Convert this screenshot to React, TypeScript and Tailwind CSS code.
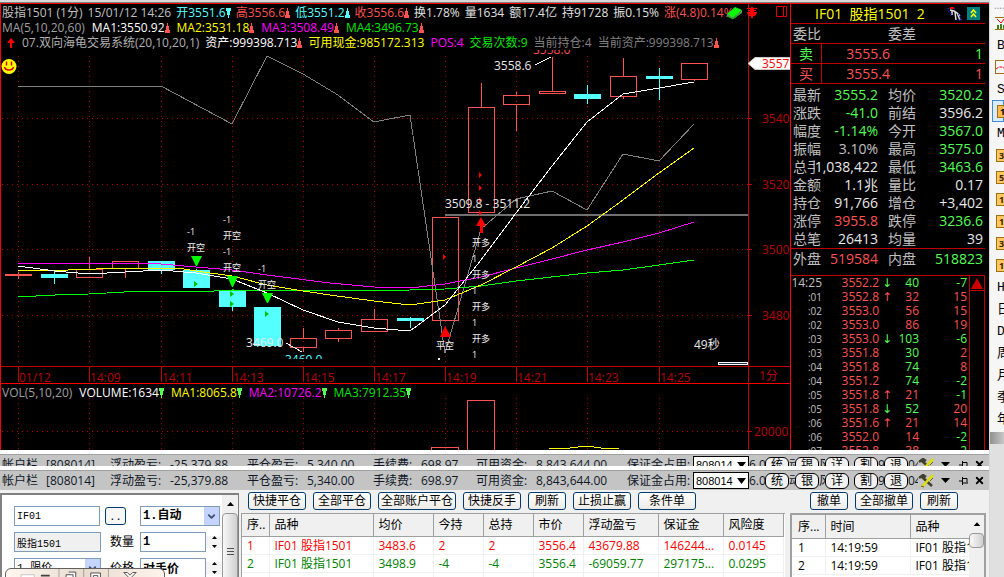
import type { ReactNode } from 'react';
import { ChevronDown, Pin, X } from 'lucide-react';

type Dir = 'up' | 'down';

interface LegendItem {
  text: string;
  color: string;
  dir?: Dir;
  dirColor?: string;
}

const quoteLegend: LegendItem[] = [
  { text: '股指1501 (1分)', color: 'text-[#c0c0c0]' },
  { text: '15/01/12 14:26', color: 'text-[#c0c0c0]' },
  { text: '开3551.6', color: 'text-[#54ffff]', dir: 'down', dirColor: '#54ffff' },
  { text: '高3556.6', color: 'text-[#ff5252]', dir: 'up', dirColor: '#ff5252' },
  { text: '低3551.2', color: 'text-[#54ffff]', dir: 'up', dirColor: '#54ffff' },
  { text: '收3556.6', color: 'text-[#ff5252]', dir: 'up', dirColor: '#ff5252' },
  { text: '换1.78%', color: 'text-[#e0e0e0]' },
  { text: '量1634', color: 'text-[#e0e0e0]' },
  { text: '额17.4亿', color: 'text-[#e0e0e0]' },
  { text: '持91728', color: 'text-[#e0e0e0]' },
  { text: '振0.15%', color: 'text-[#e0e0e0]' },
  { text: '涨(4.8)0.14%', color: 'text-[#ff5252]' },
];

const maLegend: LegendItem[] = [
  { text: 'MA(5,10,20,60)', color: 'text-[#a0a0a0]' },
  { text: 'MA1:3550.92', color: 'text-white', dir: 'up', dirColor: '#ff5252' },
  { text: 'MA2:3531.18', color: 'text-[#ffff00]', dir: 'up', dirColor: '#ff5252' },
  { text: 'MA3:3508.49', color: 'text-[#ff00ff]', dir: 'up', dirColor: '#ff5252' },
  { text: 'MA4:3496.73', color: 'text-[#00e600]', dir: 'up', dirColor: '#ff5252' },
];

const systemLegend: LegendItem[] = [
  { text: '07.双向海龟交易系统(20,10,20,1)', color: 'text-[#b0b0b0]' },
  { text: '资产:999398.713', color: 'text-white', dir: 'up', dirColor: '#ff5252' },
  { text: '可用现金:985172.313', color: 'text-[#ffff00]' },
  { text: 'POS:4', color: 'text-[#ff00ff]' },
  { text: '交易次数:9', color: 'text-[#00e600]' },
  { text: '当前持仓:4', color: 'text-[#808080]' },
  { text: '当前资产:999398.713', color: 'text-[#808080]', dir: 'up', dirColor: '#ff5252' },
];

interface Candle {
  x: number;
  top: number;
  bottom: number;
  high: number;
  low: number;
  fall?: boolean;
}

const candles: Candle[] = [
  { x: 18, top: 274, bottom: 275, high: 272, low: 279 },
  { x: 54, top: 274, bottom: 278, high: 271, low: 284, fall: true },
  { x: 89, top: 269, bottom: 277, high: 257, low: 277 },
  { x: 125, top: 261, bottom: 268, high: 261, low: 278 },
  { x: 161, top: 261, bottom: 270, high: 261, low: 274, fall: true },
  { x: 196, top: 270, bottom: 288, high: 269, low: 288, fall: true },
  { x: 232, top: 291, bottom: 307, high: 290, low: 311, fall: true },
  { x: 267, top: 307, bottom: 346, high: 307, low: 346, fall: true },
  { x: 303, top: 338, bottom: 347, high: 328, low: 352 },
  { x: 338, top: 330, bottom: 338, high: 328, low: 342 },
  { x: 374, top: 319, bottom: 331, high: 309, low: 331 },
  { x: 410, top: 318, bottom: 321, high: 317, low: 328, fall: true },
  { x: 445, top: 217, bottom: 320, high: 217, low: 320 },
  { x: 481, top: 107, bottom: 212, high: 83, low: 212 },
  { x: 516, top: 95, bottom: 104, high: 92, low: 131 },
  { x: 552, top: 91, bottom: 93, high: 57, low: 93 },
  { x: 587, top: 94, bottom: 99, high: 85, low: 104, fall: true },
  { x: 623, top: 76, bottom: 96, high: 58, low: 99 },
  { x: 659, top: 76, bottom: 79, high: 68, low: 100, fall: true },
  { x: 694, top: 63, bottom: 79, high: 63, low: 81 },
];

const lines = [
  { color: '#808080', points: '18,86 161,86 232,124 267,56 303,74 338,95 374,122 410,115 445,353 481,229 516,199 552,191 587,210 623,154 659,161 694,124' },
  { color: '#00ff00', points: '18,296 36,296 55,295 89,294 142,291 214,291 232,290 374,291 410,290 445,289 481,286 516,281 587,273 623,270 659,265 694,260' },
  { color: '#ff00ff', points: '18,263 108,263 161,264 196,267 232,270 267,275 330,283 374,287 410,288 445,284 481,277 516,268 552,259 587,250 623,242 659,233 694,222' },
  { color: '#ffff00', points: '18,270 68,270 125,268 178,268 196,271 232,276 267,285 303,291 330,295 374,301 410,305 445,300 481,285 516,267 552,248 587,226 623,200 659,173 694,148' },
  { color: '#ffffff', points: '18,266 55,271 89,274 125,272 161,270 196,273 232,279 267,293 303,310 338,322 374,328 410,331 445,305 481,260 516,213 552,166 587,122 623,94 659,88 694,82' },
];

const gridTimes = [
  { x: 18, label: '01/12' },
  { x: 89, label: '14:09' },
  { x: 161, label: '14:11' },
  { x: 232, label: '14:13' },
  { x: 303, label: '14:15' },
  { x: 374, label: '14:17' },
  { x: 445, label: '14:19' },
  { x: 516, label: '14:21' },
  { x: 587, label: '14:23' },
  { x: 659, label: '14:25' },
];

const gridPrices = [
  { y: 118, label: '3540' },
  { y: 184, label: '3520' },
  { y: 249, label: '3500' },
  { y: 315, label: '3480' },
];

const signals = [
  { x: 187, y: 235, text: '-1' },
  { x: 187, y: 251, text: '开空' },
  { x: 223, y: 223, text: '-1' },
  { x: 223, y: 239, text: '开空' },
  { x: 223, y: 255, text: '-1' },
  { x: 223, y: 271, text: '开空' },
  { x: 258, y: 272, text: '-1' },
  { x: 258, y: 288, text: '开空' },
  { x: 436, y: 349, text: '平空' },
  { x: 472, y: 246, text: '开多' },
  { x: 472, y: 262, text: '1' },
  { x: 472, y: 278, text: '开多' },
  { x: 472, y: 294, text: '1' },
  { x: 472, y: 310, text: '开多' },
  { x: 472, y: 326, text: '1' },
  { x: 472, y: 342, text: '开多' },
  { x: 472, y: 358, text: '1' },
];

const greenMarks = [[194, 284], [230, 294], [230, 304], [265, 314]];
const redMarks = [[443, 257], [479, 175], [479, 188], [479, 200], [479, 213]];

const G = 'text-[#54ff54]';
const R = 'text-[#ff5252]';
const W = 'text-[#e8e8e8]';

const quoteRows = [
  ['最新', '3555.2', G, '均价', '3520.2', G],
  ['涨跌', '-41.0', G, '前结', '3596.2', W],
  ['幅度', '-1.14%', G, '今开', '3567.0', G],
  ['振幅', '3.10%', 'text-[#c0c0c0]', '最高', '3575.0', G],
  ['总手', '1,038,422', W, '最低', '3463.6', G],
  ['金额', '1.1兆', W, '量比', '0.17', W],
  ['持仓', '91,766', W, '增仓', '+3,402', W],
  ['涨停', '3955.8', R, '跌停', '3236.6', G],
  ['总笔', '26413', W, '均量', '39', W],
];

const ticks = [
  { time: '14:25', price: '3552.2', dir: '↓', vol: '40', volColor: G, delta: '-7' },
  { time: ':01', price: '3552.8', dir: '↑', vol: '32', volColor: R, delta: '15' },
  { time: ':02', price: '3553.0', dir: '', vol: '56', volColor: R, delta: '15' },
  { time: ':02', price: '3553.0', dir: '', vol: '86', volColor: R, delta: '19' },
  { time: ':03', price: '3553.0', dir: '↓', vol: '103', volColor: G, delta: '-6' },
  { time: ':03', price: '3551.8', dir: '', vol: '30', volColor: G, delta: '2' },
  { time: ':04', price: '3551.8', dir: '', vol: '74', volColor: G, delta: '8' },
  { time: ':04', price: '3551.2', dir: '', vol: '74', volColor: G, delta: '-2' },
  { time: ':05', price: '3551.8', dir: '↑', vol: '21', volColor: R, delta: '-1' },
  { time: ':05', price: '3551.8', dir: '↓', vol: '52', volColor: G, delta: '20' },
  { time: ':06', price: '3551.6', dir: '↑', vol: '21', volColor: R, delta: '14' },
  { time: ':06', price: '3552.0', dir: '', vol: '14', volColor: R, delta: '-2' },
  { time: ':07', price: '3552.8', dir: '', vol: '38', volColor: R, delta: '-2' },
];

const positionHead = ['序..', '品种', '均价', '今持', '总持', '市价', '浮动盈亏', '保证金', '风险度'];
const positionRows = [
  { color: 'text-[#ff0000]', cells: ['1', 'IF01 股指1501', '3483.6', '2', '2', '3556.4', '43679.88', '146244...', '0.0145'] },
  { color: 'text-[#008000]', cells: ['2', 'IF01 股指1501', '3498.9', '-4', '-4', '3556.4', '-69059.77', '297175...', '0.0295'] },
];

function LegendRow({ items, gap, children }: { items: LegendItem[]; gap: string; children?: ReactNode }) {
  return (
    <div className={`flex h-[15px] items-center whitespace-nowrap ${gap}`}>
      {children}
      {items.map((item) => (
        <span key={item.text} className={`flex shrink-0 items-center ${item.color}`}>
          {item.text}
          {item.dir && (
            <svg className="h-[10px] w-[5px]" viewBox="0 0 5 10" fill={item.dirColor}>
              {item.dir === 'up' ? (
                <path d="M2 0h1v3h1v4h1v3H0V7h1V3h1z" />
              ) : (
                <path d="M0 0h5v3H4v4H3v3H2V7H1V3H0z" />
              )}
            </svg>
          )}
        </span>
      ))}
    </div>
  );
}

function ChartHeader() {
  return (
    <div className="relative flex shrink-0 pl-[2px] text-xs leading-[15px]">
      <div className="min-w-0 flex-1 overflow-hidden border-r border-[#c00000] pt-px">
        <LegendRow items={quoteLegend} gap="gap-[5px]" />
        <LegendRow items={maLegend} gap="gap-[7px]" />
        <LegendRow items={systemLegend} gap="gap-[6px]">
          <svg className="ml-[4px] h-[10px] w-[10px] shrink-0" viewBox="0 0 10 10" fill="#ff0000">
            <path d="M5 0l4 5H6v5H4V5H1z" />
          </svg>
        </LegendRow>
      </div>
      <div className="w-[41px] shrink-0" />
      <div className="absolute right-[3px] top-[2px] flex items-start">
        <svg className="h-[14px] w-[17px]" viewBox="0 0 17 14">
          <path d="M1 8l8-7 7 3-9 8z" fill="#00ff00" />
          <path d="M1 8l6 4 9-8v3l-9 6-6-3z" fill="#888" />
          <path d="M1 10l6 3 9-7" fill="none" stroke="#00c000" />
        </svg>
        <svg className="ml-[4px] mt-px h-[11px] w-[10px]" viewBox="0 0 10 11" fill="#ff0000">
          <path d="M0 1h4V0h2v1h4v1H7v1h2v1H7v1h3v1L8 9H6v2H4V9H2L0 6V5h3V4H1V3h2V2H0z" />
        </svg>
        <svg className="ml-[19px] h-[11px] w-[11px]" viewBox="0 0 11 11" stroke="#e00000" fill="none">
          <path d="M.5.5h10v10H.5zM7.500.5v10" />
        </svg>
      </div>
    </div>
  );
}

function Chart() {
  return (
    <svg
      className="min-h-0 w-full flex-1 text-xs"
      viewBox="0 50 790 400"
      preserveAspectRatio="xMinYMin meet"
      role="img"
      aria-label="股指1501 1分"
    >
      <defs>
        <clipPath id="pane">
          <rect x="0" y="50" width="790" height="309" />
        </clipPath>
      </defs>

      {/* grid */}
      <g stroke="#b00000" strokeDasharray="1 4" shapeRendering="crispEdges">
        {gridTimes.map((t) => (
          <path key={t.x} d={`M${t.x}.5 56V366M${t.x}.5 398V450`} />
        ))}
        {gridPrices.map((p) => (
          <path key={p.y} d={`M2 ${p.y}.5H748`} />
        ))}
        <path d="M2 431.5H748" />
      </g>
      <g stroke="#c00000" shapeRendering="crispEdges">
        <path d="M748.5 50V450M0 366.5H790" />
        <path d="M0 383.5H790" stroke="#ff0000" />
        {gridTimes.map((t) => (
          <path key={t.x} d={`M${t.x}.5 366V382`} />
        ))}
        {gridPrices.map((p) => (
          <path key={p.y} d={`M748 ${p.y}.5h4`} />
        ))}
        <path d="M748 431.5h4" />
      </g>
      <g fill="#b80000">
        {gridTimes.map((t) => (
          <text key={t.x} x={t.x + 1} y="382">{t.label}</text>
        ))}
        {gridPrices.map((p) => (
          <text key={p.y} x="762" y={p.y + 5}>{p.label}</text>
        ))}
        <text x="754" y="436">20000</text>
        <text x="759" y="380">1分</text>
      </g>

      {/* candles */}
      <g shapeRendering="crispEdges">
        {candles.map((c) =>
          c.fall ? (
            <g key={c.x} fill="#54ffff">
              <rect x={c.x - 13} y={c.top} width="27" height={c.bottom - c.top} />
              <rect x={c.x} y={c.high} width="1" height={c.low - c.high} />
            </g>
          ) : (
            <g key={c.x} stroke="#ff5252" fill="none">
              <rect x={c.x - 12.5} y={c.top + 0.5} width="26" height={c.bottom - c.top} />
              <path d={`M${c.x}.5 ${c.high}V${c.top}M${c.x}.5 ${c.bottom}V${c.low}`} />
            </g>
          )
        )}
        <path d="M431.5 450v-2.500h27v2.500M467.500 450V400.500h27V450" stroke="#ff5252" fill="none" />
        <path d="M445 215H748" stroke="#707070" strokeWidth="2" />
        <rect x="718.5" y="362.5" width="29" height="2" fill="#203050" stroke="#fff" />
      </g>

      <g fill="none" shapeRendering="crispEdges">
        {lines.map((l) => (
          <polyline key={l.color} points={l.points} stroke={l.color} />
        ))}
        <polyline points="549,449 570,448 587,446 601,448 619,449" stroke="#ffff00" />
        <path d="M286 343L302 352M535 65L551 57" stroke="#fff" />
      </g>

      {/* signals */}
      <g fill="#00ff00">
        <path d="M191 256h11l-5 10h-1zM227 276h11l-5 11h-1zM262 293h11l-5 10h-1z" />
        {greenMarks.map(([x, y]) => (
          <path key={`${x}-${y}`} d={`M${x} ${y - 3}l4 3-4 3z`} fill="#00c000" />
        ))}
      </g>
      <g fill="#ff0000">
        <path d="M481 217l5 9h-3v7h-3v-7h-4zM445 326l6 11h-11z" />
        {redMarks.map(([x, y]) => (
          <path key={`${x}-${y}`} d={`M${x} ${y - 3}l3 3-3 3z`} />
        ))}
      </g>
      <g fill="#f0f0f0" className="text-[9px]">
        {signals.map((s) => (
          <text key={`${s.x}-${s.y}`} x={s.x} y={s.y}>{s.text}</text>
        ))}
        <rect x="438" y="358" width="2" height="2" />
      </g>
      <g fill="#e8e8e8">
        <text x="494" y="70">3558.6</text>
        <text x="445" y="208">3509.8 - 3511.2</text>
        <text x="246" y="347">3469.0</text>
        <text x="694" y="349">49秒</text>
        <g clipPath="url(#pane)">
          <text x="285" y="364" fill="#54ffff">3469.0</text>
          <text x="533" y="54" fill="#ff5252">3558.6</text>
        </g>
      </g>

      {/* last price tag */}
      <path d="M748 63.500l7-6h36v12h-36z" fill="#fff" stroke="#c8c8c8" />
      <text x="762" y="68" fill="#ff0000">3557</text>

      <circle cx="9" cy="66.500" r="7.500" fill="#ffff00" />
      <path d="M6.500 61.500v4M11.500 61.500v4M4.500 67c1 4 8 4 9 0" stroke="#e00000" fill="none" strokeWidth="1.500" />
    </svg>
  );
}

function VolumeLegend() {
  const items: LegendItem[] = [
    { text: 'VOL(5,10,20)', color: 'text-[#a0a0a0]' },
    { text: 'VOLUME:1634', color: 'text-white', dir: 'down', dirColor: '#54ff54' },
    { text: 'MA1:8065.8', color: 'text-[#ffff00]', dir: 'down', dirColor: '#54ff54' },
    { text: 'MA2:10726.2', color: 'text-[#ff00ff]', dir: 'down', dirColor: '#54ff54' },
    { text: 'MA3:7912.35', color: 'text-[#00e600]', dir: 'down', dirColor: '#54ff54' },
  ];
  return (
    <div className="absolute left-[2px] top-[381px] text-xs leading-[15px]">
      <LegendRow items={items} gap="gap-[7px]" />
    </div>
  );
}

function QuotePanel() {
  return (
    <aside className="flex w-[199px] shrink-0 flex-col overflow-hidden border-l border-t border-[#ff0000] bg-black pr-[4px] text-sm leading-[18px] text-[#c0c0c0]">
      <header className="flex h-5 shrink-0 items-center border-b border-[#c00000] pl-6 text-[#ffff00]">
        <span className="flex-1 whitespace-pre">IF01  股指1501  2</span>
        <svg className="mr-1 h-[14px] w-[16px]" viewBox="0 0 16 14">
          <path d="M3 3l4 1 3 2 3 7M5 4v4M8 5l1 8M10 6l3 3" stroke="#e0e0e0" fill="none" strokeWidth="1.500" />
          <path d="M0 2l3-1h4l1 2M1 4l3 2v3M11 7l4 6h-4" stroke="#2020e0" fill="none" strokeDasharray="2 1" />
          <path d="M3 1h4" stroke="#ff0000" strokeWidth="2" />
        </svg>
        <button aria-label="收起" className="mr-[5px] flex h-[13px] w-[13px] items-center justify-center bg-[#008080]">
          <svg className="h-[9px] w-[7px]" viewBox="0 0 7 9" fill="none" stroke="#ffff00" strokeWidth="1.500">
            <path d="M1 4l2.500-3L6 4M1 8l2.500-3L6 8" />
          </svg>
        </button>
      </header>
      <div className="flex h-5 shrink-0 items-center border-b border-[#c00000] pl-[2px]">
        <span className="w-[95px]">委比</span>
        <span>委差</span>
      </div>
      <div className={`flex h-5 shrink-0 items-center border-b border-[#c00000] pr-[2px] ${G}`}>
        <span className="flex h-full w-[31px] items-center justify-center border-r border-[#c00000]">卖</span>
        <span className={`w-[68px] text-right ${R}`}>3555.6</span>
        <span className="flex-1 text-right">1</span>
      </div>
      <div className={`flex h-5 shrink-0 items-center border-b border-[#c00000] pr-[2px] ${R}`}>
        <span className="flex h-full w-[31px] items-center justify-center border-r border-[#c00000]">买</span>
        <span className="w-[68px] text-right">3555.4</span>
        <span className="flex-1 text-right">1</span>
      </div>
      <table className="mt-[2px] w-full shrink-0 table-fixed">
        <tbody>
          {quoteRows.map(([a, av, ac, b, bv, bc]) => (
            <tr key={a} className="h-[18px]">
              <th className="w-[30px] p-0 pl-[2px] text-left font-normal">{a}</th>
              <td className={`w-[57px] p-0 ${ac}`}>
                <span className="flex justify-end"><span className="bg-black">{av}</span></span>
              </td>
              <th className="w-[38px] p-0 pl-[10px] text-left font-normal">{b}</th>
              <td className={`p-0 pr-[2px] text-right ${bc}`}>{bv}</td>
            </tr>
          ))}
        </tbody>
      </table>
      <div className="flex h-7 shrink-0 items-start border-b border-t border-[#c00000] pl-[2px] pr-[2px] pt-px">
        <span className="w-[28px]">外盘</span>
        <span className={`w-[57px] text-right ${R}`}>519584</span>
        <span className="ml-[10px]">内盘</span>
        <span className={`flex-1 text-right ${G}`}>518823</span>
      </div>
      <div className="flex min-h-0 flex-1 overflow-hidden text-xs leading-[14px]">
        <table className="table-fixed flex-1 self-start">
          <tbody>
            {ticks.map((t, i) => (
              <tr key={i} className="h-[14px]">
                <td className={`w-[31px] p-0 text-right ${i === 0 ? '' : 'text-[10px]'}`}>{t.time}</td>
                <td className={`w-[57px] p-0 text-right ${R}`}>{t.price}</td>
                <td className={`w-[16px] p-0 text-center font-['DejaVu_Sans'] ${t.dir === '↓' ? G : R}`}>{t.dir}</td>
                <td className={`w-[24px] p-0 text-right ${t.volColor}`}>{t.vol}</td>
                <td className={`p-0 pr-[2px] text-right ${t.delta.startsWith('-') ? G : R}`}>{t.delta}</td>
              </tr>
            ))}
          </tbody>
        </table>
        <div className="w-[16px] shrink-0 border-x border-[#c00000]">
          <button aria-label="向上滚动" className="flex h-[15px] w-full items-center justify-center border-b border-[#c00000]">
            <svg className="h-[11px] w-[12px]" viewBox="0 0 12 11" fill="#d00000"><path d="M6 0l6 11H0z" /></svg>
          </button>
        </div>
      </div>
    </aside>
  );
}

const railText = (t: string) => <span className="pl-[7px] font-['Liberation_Mono','Noto_Sans_CJK_SC',monospace] text-[13px]">{t}</span>;
const railBox = (t: string) => (
  <span className="ml-[6px] flex h-[13px] w-[18px] shrink-0 items-center border border-[#a07010] bg-[#ffc860] pl-[2px] text-[9px] font-bold text-[#402000]">
    {t}
  </span>
);

function Rail() {
  return (
    <nav className="flex min-w-0 flex-1 flex-col overflow-hidden border-l border-[#d8d8d8] bg-[#f6f6f6] leading-none text-black">
      <div className="h-3 shrink-0 pl-[4px] text-[10px] text-[#909090]">....</div>
      <button className="flex h-[22px] shrink-0 items-center">
        <svg className="ml-[5px] h-[13px] w-[14px] shrink-0" viewBox="0 0 14 13" fill="none">
          <path d="M0 .5h14M0 12.500h14" stroke="#a07010" />
          <path d="M2 2l4 4 3-4 4 4" stroke="#ff0000" />
          <path d="M3 12V8M6 12V7M9 12V8M12 12V5" stroke="#408020" strokeWidth="2" />
        </svg>
      </button>
      <button className="flex h-[22px] shrink-0 items-center">{railText('B')}</button>
      <button className="flex h-[22px] shrink-0 items-center">
        <svg className="ml-[5px] h-[14px] w-[14px] shrink-0" viewBox="0 0 14 14" fill="none">
          <path d="M.5.5H14M.5 13.500H14M.5 0v14" stroke="#a07010" />
          <path d="M1 9l3-2h3l2 1 4-3" stroke="#ff0000" strokeDasharray="3 1" />
        </svg>
      </button>
      <button className="flex h-[22px] shrink-0 items-center">{railText('S')}</button>
      <button className="ml-[2px] flex h-[22px] shrink-0 items-center border border-[#3c8cdc] bg-[#dcebfc]">
        <span className="ml-[4px] flex h-[13px] w-[18px] shrink-0 items-center border border-[#a07010] bg-[#ffb850] pl-[2px] text-[9px] font-bold">1</span>
      </button>
      <button className="flex h-[22px] shrink-0 items-center">{railText('M')}</button>
      {['3', '5', '10', '15', '30', '1'].map((t, i) => (
        <button key={i} className="flex h-[22px] shrink-0 items-center">{railBox(t)}</button>
      ))}
      {['H', '日', 'D', '周', '月', '季', '年'].map((t) => (
        <button key={t} className="flex h-[22px] shrink-0 items-center">{railText(t)}</button>
      ))}
      <div className="mt-[2px] h-[12px] shrink-0 bg-gradient-to-r from-[#909090] to-[#c8c8c8]" />
      <div className="flex-1 bg-[#e0e0e0]" />
    </nav>
  );
}

function PillButton({ children }: { children: string }) {
  return (
    <button className="h-[16px] w-[24px] shrink-0 rounded-md border border-black bg-[#f0f0f0] text-center leading-[14px] text-black">
      {children}
    </button>
  );
}

function AccountBar({ id, className }: { id: string; className: string }) {
  return (
    <div className={`shrink-0 overflow-hidden border-t border-[#a0a0a0] bg-[#c4c4c4] ${className}`}>
      <div className="flex h-[19px] items-center whitespace-nowrap pl-[2px] text-xs leading-[19px] text-[#101828]">
        <span className="w-[44px] shrink-0">帐户栏</span>
        <span className="w-[64px] shrink-0">[808014]</span>
        <span className="w-[60px] shrink-0">浮动盈亏:</span>
        <span className="w-[77px] shrink-0">-25,379.88</span>
        <span className="w-[60px] shrink-0">平仓盈亏:</span>
        <span className="w-[66px] shrink-0">5,340.00</span>
        <span className="w-[48px] shrink-0">手续费:</span>
        <span className="w-[55px] shrink-0">698.97</span>
        <span className="w-[60px] shrink-0">可用资金:</span>
        <span className="w-[91px] shrink-0">8,843,644.00</span>
        <label htmlFor={id} className="w-[66px] shrink-0">保证金占用:</label>
        <span className="relative w-[56px] shrink-0">
          <select
            id={id}
            className="block h-[17px] w-full appearance-none border border-black bg-white pl-[2px] font-['Liberation_Sans',sans-serif] text-[11px] leading-[14px] text-black"
          >
            <option>808014</option>
          </select>
          <svg className="pointer-events-none absolute right-[3px] top-[6px] h-[6px] w-[9px]" viewBox="0 0 9 6"><path d="M0 0h9L4.500 6z" /></svg>
        </span>
        <span className="w-[16px] shrink-0 overflow-hidden">6.0</span>
        <PillButton>统</PillButton>
        <span className="w-[6px] shrink-0 overflow-hidden">动</span>
        <PillButton>银</PillButton>
        <span className="w-[6px] shrink-0 overflow-hidden">风</span>
        <PillButton>详</PillButton>
        <span className="w-[5px] shrink-0" />
        <PillButton>割</PillButton>
        <span className="w-[6px] shrink-0 overflow-hidden">9</span>
        <PillButton>退</PillButton>
        <span className="w-[10px] shrink-0 overflow-hidden">04.5</span>
        <svg className="h-[14px] w-[16px] shrink-0" viewBox="0 0 16 14" fill="none">
          <path d="M1 4l4-3 3 2M4 3l10 9" stroke="#404030" strokeWidth="2.500" />
          <path d="M15 1l-4 4-7 8" stroke="#e0e000" strokeWidth="2.500" />
          <path d="M15 4l-3 3M6 13l-3-1" stroke="#606020" />
        </svg>
        <button aria-label="菜单" className="ml-[7px] shrink-0">
          <svg className="h-[5px] w-[9px]" viewBox="0 0 9 5"><path d="M0 0h9L4.500 5z" /></svg>
        </button>
        <button aria-label="固定" className="ml-[9px] shrink-0">
          <svg className="h-[8px] w-[9px]" viewBox="0 0 9 8" fill="none" stroke="#000">
            <path d="M0 4h3M3.500 0v8M3 1.500h5v4M3 6h6" />
          </svg>
        </button>
        <button aria-label="关闭" className="ml-[6px] shrink-0">
          <X className="h-[11px] w-[11px] text-black" strokeWidth={4} />
        </button>
      </div>
    </div>
  );
}

function XpButton({ children, className }: { children: string; className: string }) {
  return (
    <button className={`h-[18px] shrink-0 rounded-[3px] border border-[#003c74] bg-gradient-to-b from-white to-[#ecebe6] text-center text-xs leading-[16px] text-black ${className}`}>
      {children}
    </button>
  );
}

function Spinner() {
  return (
    <span className="flex w-[16px] shrink-0 flex-col items-center gap-[6px] bg-[#f4f4f4]">
      <svg className="h-[3px] w-[5px]" viewBox="0 0 5 3"><path d="M0 3h5L2.500 0z" /></svg>
      <svg className="h-[3px] w-[5px]" viewBox="0 0 5 3"><path d="M0 0h5L2.500 3z" /></svg>
    </span>
  );
}

function SelectArrow() {
  return (
    <span className="pointer-events-none absolute right-px top-px flex h-[18px] w-[15px] items-center justify-center bg-[#c4d4fc]">
      <ChevronDown className="h-[11px] w-[11px] text-[#405078]" strokeWidth={4} />
    </span>
  );
}

const fieldClass = "h-5 border border-[#7f9db9] pl-[2px] font-['Liberation_Mono','Noto_Sans_CJK_SC',monospace] text-black";

function OrderForm() {
  return (
    <div className="relative mt-[3px] flex w-[239px] shrink-0 self-stretch overflow-hidden border-l-2 border-r border-t-2 border-[#808080] bg-white text-xs text-black">
      <form className="w-[220px] shrink-0 overflow-hidden pl-[12px] pt-[11px]">
        <div className="flex items-center">
          <input aria-label="合约" defaultValue="IF01" className={`${fieldClass} w-[86px] bg-white text-[10px]`} />
          <button type="button" className="ml-[5px] h-[18px] w-[21px] rounded-[3px] border border-[#003c74] bg-[#f6f6f4] leading-[14px]">. .</button>
          <span className="relative ml-[14px] w-[80px] shrink-0">
            <select aria-label="开平" className={`${fieldClass} block w-full appearance-none bg-white font-bold`}>
              <option>1.自动</option>
            </select>
            <SelectArrow />
          </span>
        </div>
        <div className="mt-[6px] flex items-center">
          <input aria-label="品种" readOnly defaultValue="股指1501" className={`${fieldClass} w-[87px] bg-[#f0f0f0] text-[10px]`} />
          <label htmlFor="qty" className="ml-[9px] w-[30px] shrink-0">数量</label>
          <input id="qty" defaultValue="1" className={`${fieldClass} w-[66px] bg-white font-bold`} />
          <Spinner />
        </div>
        <div className="mt-[6px] flex items-center">
          <span className="relative w-[87px] shrink-0">
            <select aria-label="价格类型" className={`${fieldClass} block w-full appearance-none bg-white text-[11px]`}>
              <option>1.限价</option>
            </select>
            <SelectArrow />
          </span>
          <label htmlFor="price" className="ml-[9px] w-[30px] shrink-0">价格</label>
          <input id="price" defaultValue="对手价" className={`${fieldClass} w-[66px] bg-white font-bold`} />
          <Spinner />
        </div>
      </form>
      <div className="flex-1 bg-[#f0f0f0]">
        <svg className="h-[18px] w-full" viewBox="0 0 16 18"><path d="M5 11h7L8.500 7z" /></svg>
        <div className="flex h-[90px] flex-col items-center gap-[2px] rounded-sm border border-[#989898] bg-gradient-to-r from-[#f8f8f8] to-[#d0d0d0] pt-[34px]">
          <span className="h-px w-[7px] bg-[#505050]" />
          <span className="h-px w-[7px] bg-[#505050]" />
          <span className="h-px w-[7px] bg-[#505050]" />
        </div>
      </div>
      {/* floating window controls */}
      <div className="absolute -bottom-2 left-[3px] flex h-[17px] w-[160px] rounded-md border border-[#606060] bg-gradient-to-r from-[#fff8f0] via-[#e8dcd0] to-[#fff4ec]">
        <svg className="h-full w-full" viewBox="0 0 160 17" fill="none" stroke="#404040">
          <path d="M50.500 0v17M78.500 0v17M106.500 0v17" stroke="#a09890" />
          <path d="M7.500 6.500h15v8h-15z" fill="#fff" stroke="#c0c0c0" />
          <path d="M30 7.500h10" strokeWidth="2" />
          <path d="M61.500 3.500h8v8M58.500 6.500h8v8h-8z" fill="#fff" />
          <path d="M86.500 4.500h11v10h-11zM89.500 7.500h5v3h-5z" fill="#fff" />
          <path d="M124 4h4l3 3 3-3h4l-5 5 5 5h-14l5-5z" fill="#fff" />
        </svg>
      </div>
    </div>
  );
}

const positionWidths = ['w-[27px]', 'w-[104px]', 'w-[60px]', 'w-[50px]', 'w-[50px]', 'w-[50px]', 'w-[75px]', 'w-[65px]', 'w-[60px]'];

function Positions() {
  return (
    <section className="min-w-0 flex-1 overflow-hidden pl-[2px]">
      <div className="flex gap-[7px] pl-[7px] pt-[2px]">
        <XpButton className="w-[58px]">快捷平仓</XpButton>
        <XpButton className="w-[58px]">全部平仓</XpButton>
        <XpButton className="w-[78px]">全部账户平仓</XpButton>
        <XpButton className="w-[58px]">快捷反手</XpButton>
        <XpButton className="w-[38px]">刷新</XpButton>
        <XpButton className="w-[58px]">止损止赢</XpButton>
        <XpButton className="w-[58px]">条件单</XpButton>
      </div>
      <div className="mr-[4px] mt-[3px] h-full border-l border-t border-[#a0a0a0] bg-white">
        <table className="table-fixed text-left text-xs leading-[17px]">
          <thead>
            <tr className="h-[22px] bg-[#f0f0f0] text-black">
              {positionHead.map((h, i) => (
                <th key={h} className={`overflow-hidden whitespace-nowrap border-b border-r border-[#a0a0a0] p-0 pl-[5px] font-normal ${positionWidths[i]}`}>{h}</th>
              ))}
            </tr>
          </thead>
          <tbody>
            {positionRows.map((row) => (
              <tr key={row.cells[0]} className={`h-[18px] ${row.color}`}>
                {row.cells.map((cell, i) => (
                  <td key={i} className="whitespace-nowrap border-b border-r border-[#f0f0f0] p-0 pl-[5px]">{cell}</td>
                ))}
              </tr>
            ))}
            <tr className="h-[18px]">
              {positionHead.map((h) => (
                <td key={h} className="border-r border-[#f0f0f0] p-0" />
              ))}
            </tr>
          </tbody>
        </table>
      </div>
    </section>
  );
}

function Orders() {
  return (
    <section className="w-[200px] shrink-0 overflow-hidden">
      <div className="flex gap-[7px] pl-[21px] pt-[2px]">
        <XpButton className="w-[38px]">撤单</XpButton>
        <XpButton className="w-[58px]">全部撤单</XpButton>
        <XpButton className="w-[38px]">刷新</XpButton>
      </div>
      <div className="ml-px mr-[3px] mt-[3px] flex h-full border-2 border-[#a0a0a0] bg-white">
        <div className="min-w-0 flex-1 overflow-hidden">
          <table className="w-full table-fixed text-left text-xs leading-[17px] text-black">
            <thead>
              <tr className="h-[23px] bg-[#f0f0f0]">
                <th className="w-[33px] border-b border-r border-[#a0a0a0] p-0 pl-[6px] font-normal">序...</th>
                <th className="w-[85px] border-b border-r border-[#a0a0a0] p-0 pl-[5px] font-normal">时间</th>
                <th className="border-b border-[#a0a0a0] p-0 pl-[5px] font-normal">品种</th>
              </tr>
            </thead>
            <tbody>
              {['1', '2'].map((n) => (
                <tr key={n} className="h-[18px]">
                  <td className="border-b border-r border-[#f0f0f0] p-0 pl-[6px]">{n}</td>
                  <td className="border-b border-r border-[#f0f0f0] p-0 pl-[5px]">14:19:59</td>
                  <td className="overflow-hidden whitespace-nowrap border-b border-[#f0f0f0] p-0 pl-[5px]">IF01 股指1501</td>
                </tr>
              ))}
            </tbody>
          </table>
        </div>
        <div className="w-[15px] shrink-0 bg-[#f0f0f0]">
          <svg className="h-[18px] w-full" viewBox="0 0 16 18"><path d="M5 11h7L8.500 7z" /></svg>
          <div className="h-[15px] rounded-sm border border-[#989898] bg-gradient-to-r from-[#f8f8f8] to-[#d0d0d0]" />
        </div>
      </div>
    </section>
  );
}

export default function App() {
  return (
    <div className="flex h-screen w-full overflow-hidden bg-white font-['Open_Sans','Noto_Sans_CJK_SC',sans-serif]">
      <div className="flex w-[calc(100%-15px)] shrink-0 flex-col">
        <div className="h-[3px] shrink-0 border-b border-[#808080] bg-[#d8d8d8]" />
        <main className="flex min-h-0 flex-1 bg-black">
          <div className="relative flex min-w-0 flex-1 flex-col border-t border-[#ff0000]">
            <ChartHeader />
            <Chart />
            <VolumeLegend />
            <div className="absolute inset-y-0 left-0 w-px bg-[#ff0000]" />
          </div>
          <QuotePanel />
        </main>
        <div className="h-[4px] shrink-0 bg-white" />
        <AccountBar id="account-top" className="h-[12px]" />
        <div className="h-[4px] shrink-0 bg-white" />
        <AccountBar id="account" className="h-[20px]" />
        <footer className="flex h-[87px] shrink-0 overflow-hidden bg-[#f0f0f0]">
          <OrderForm />
          <Positions />
          <Orders />
        </footer>
      </div>
      <Rail />
    </div>
  );
}
